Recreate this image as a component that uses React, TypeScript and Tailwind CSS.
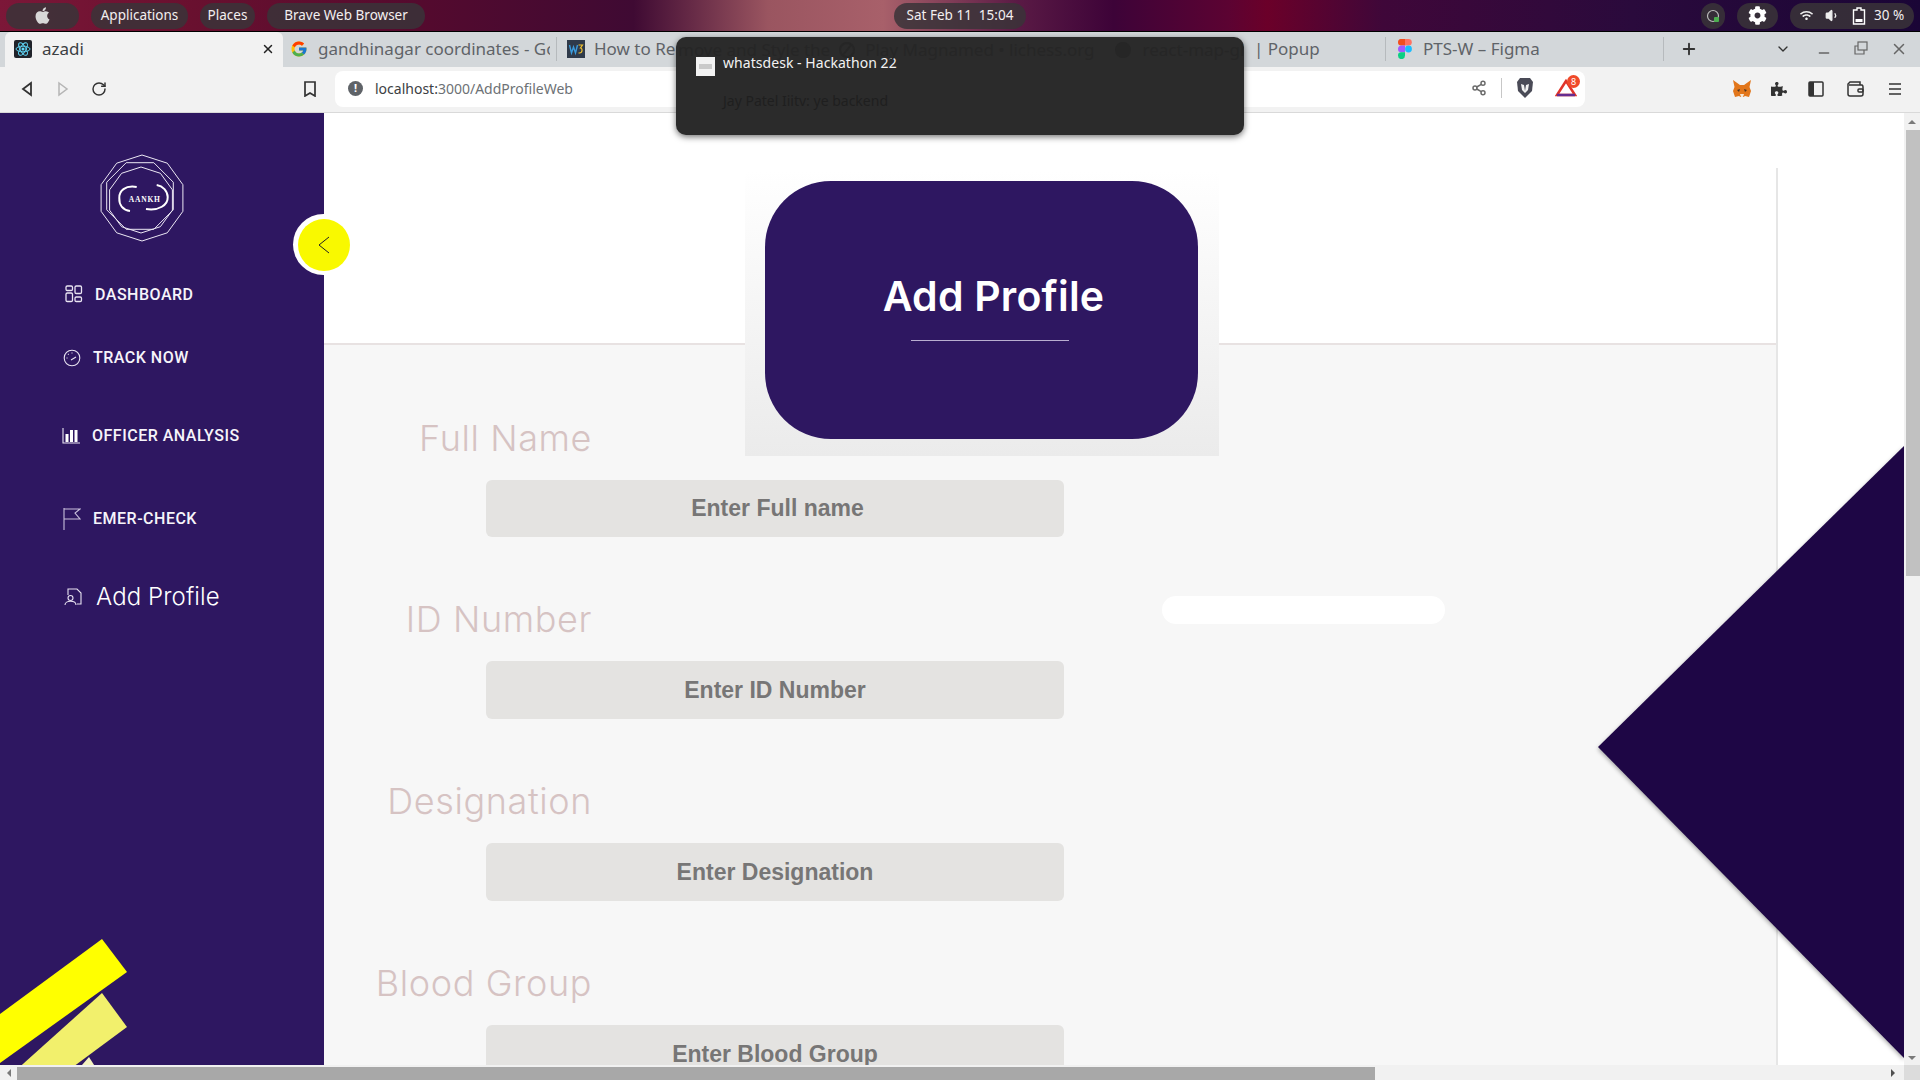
import { ChevronDown, Minus, Plus, RotateCw, Share2, Volume1, X } from 'lucide-react'
import { FaApple, FaCog, FaPuzzlePiece, FaWifi } from 'react-icons/fa'
import { FcGoogle } from 'react-icons/fc'

const uiFont = "font-['Noto_Sans',sans-serif]"

const fields = [
  { label: 'Full Name', placeholder: 'Enter Full name', box: 'h-[57px] pl-[5px]' },
  { label: 'ID Number', placeholder: 'Enter ID Number', box: 'h-[58px]' },
  { label: 'Designation', placeholder: 'Enter Designation', box: 'h-[58px]' },
  { label: 'Blood Group', placeholder: 'Enter Blood Group', box: 'h-[58px]' },
]

function polygonPoints(cx: number, cy: number, r: number, sides: number, start: number) {
  const pts: string[] = []
  for (let i = 0; i < sides; i++) {
    const a = start + (i * Math.PI * 2) / sides
    pts.push(`${(cx + r * Math.cos(a)).toFixed(1)},${(cy + r * Math.sin(a)).toFixed(1)}`)
  }
  return pts.join(' ')
}

function Logo() {
  return (
    <svg width="90" height="90" viewBox="0 0 90 90" fill="none" stroke="#ece8f4" strokeWidth="1">
      <polygon points={polygonPoints(45, 45, 43, 10, -Math.PI / 2)} />
      <polygon points={polygonPoints(43, 43, 36, 8, -Math.PI / 8)} />
      <polygon points={polygonPoints(44, 47, 33, 10, -Math.PI / 2)} />
      <path d="M39.700 34C28 32 22 38 22.300 45C22 52 26 57 33 58" strokeWidth="2" stroke="#fff" />
      <path d="M49 56C62 58 71 52 70.700 44C70.500 38 66 33 59.700 32" strokeWidth="2" stroke="#fff" />
      <text x="47.700" y="48.500" textAnchor="middle" fill="#fff" stroke="none" fontSize="7.500" fontWeight="700" fontFamily="Liberation Serif, serif" letterSpacing="0.8">AANKH</text>
    </svg>
  )
}

function ReactFavicon() {
  return (
    <svg width="18" height="18" viewBox="0 0 18 18" fill="none">
      <rect width="18" height="18" rx="2" fill="#20232a" />
      <g stroke="#61dafb" strokeWidth="0.9">
        <ellipse cx="9" cy="9" rx="7" ry="2.800" />
        <ellipse cx="9" cy="9" rx="7" ry="2.800" transform="rotate(60 9 9)" />
        <ellipse cx="9" cy="9" rx="7" ry="2.800" transform="rotate(120 9 9)" />
      </g>
      <circle cx="9" cy="9" r="1.500" fill="#61dafb" />
    </svg>
  )
}

function W3Favicon() {
  return (
    <svg width="18" height="18" viewBox="0 0 18 18" fill="none">
      <rect width="18" height="18" fill="#2f3a4a" />
      <path d="M2.500 5l2 8 2-6 2 6 2-8" stroke="#3b9bdc" strokeWidth="1.400" />
      <path d="M11.500 5h4l-2 3c2 0 2.400 5-1 5h-1" stroke="#f2c230" strokeWidth="1.200" />
    </svg>
  )
}

function FigmaFavicon() {
  return (
    <svg width="14" height="20" viewBox="0 0 14 20">
      <path d="M0 3.300A3.300 3.300 0 0 1 3.500 0H7v6.600H3.500A3.300 3.300 0 0 1 0 3.300z" fill="#f24e1e" />
      <path d="M7 0h3.500a3.300 3.300 0 0 1 0 6.600H7z" fill="#ff7262" />
      <path d="M0 10a3.300 3.300 0 0 1 3.500-3.400H7v6.700H3.500A3.300 3.300 0 0 1 0 10z" fill="#a259ff" />
      <circle cx="10.500" cy="10" r="3.400" fill="#1abcfe" />
      <path d="M0 16.600a3.300 3.300 0 0 1 3.500-3.300H7v3.300a3.400 3.400 0 0 1-7 0z" fill="#0acf83" />
    </svg>
  )
}

function Fox() {
  return (
    <svg width="20" height="20" viewBox="0 0 20 20">
      <path d="M1 1l7 5h4l7-5-1.500 7 1.500 4-2 6-4-1-1.500 1h-3L7 17l-4 1-2-6 1.500-4z" fill="#e2761b" />
      <path d="M5 11l3-1-1 3zM15 11l-3-1 1 3z" fill="#4a3424" />
      <path d="M8 15h4l-1 3H9z" fill="#f5e6d6" />
    </svg>
  )
}

function TopPill({ className, children }: { className: string; children: React.ReactNode }) {
  return (
    <div className={`h-[26px] rounded-full bg-[#3a3438]/85 text-[#f3eff0] flex items-center justify-center text-[13.5px] ${className}`}>
      {children}
    </div>
  )
}

function TopBar() {
  return (
    <div className={`h-8 shrink-0 flex items-center border-b border-black bg-[linear-gradient(90deg,#7c1738_0%,#69102f_10%,#540a2e_22%,#3f0a33_33%,#9a5560_40%,#a8606a_46%,#5a1a45_53%,#3d0338_58%,#5c0332_64%,#6b0029_66%,#3f0739_72%,#2a0a3c_85%,#1a0536_100%)] ${uiFont}`}>
      <TopPill className="w-[73px] ml-[6px]"><FaApple size={19} color="#d8d8d8" /></TopPill>
      <TopPill className="w-[97px] ml-3">Applications</TopPill>
      <TopPill className="w-[55px] ml-3">Places</TopPill>
      <TopPill className="w-[158px] ml-3">Brave Web Browser</TopPill>
      <TopPill className="w-[132px] ml-[469px]">Sat Feb 11&nbsp; 15:04</TopPill>
      <TopPill className="w-[24px] ml-[675px] bg-[#2f2b33]">
        <svg width="14" height="14" viewBox="0 0 14 14" fill="none">
          <circle cx="7" cy="7" r="5.500" stroke="#bbb" strokeWidth="1.200" />
          <rect x="8" y="8" width="5" height="5" rx="1" fill="#4caf50" />
        </svg>
      </TopPill>
      <TopPill className="w-[41px] ml-3 bg-[#1f1a26]"><FaCog size={19} color="#fff" /></TopPill>
      <TopPill className="w-[124px] ml-3 gap-3 !justify-start pl-[10px] bg-[#2a2630]">
        <FaWifi size={13} color="#eee" />
        <Volume1 size={15} color="#eee" fill="#eee" />
        <svg width="14" height="18" viewBox="0 0 14 18" fill="none">
          <path d="M5 1h4v2h3.500v14h-11V3H5z" stroke="#fff" strokeWidth="1.400" />
          <rect x="3.500" y="12" width="7" height="3" fill="#fff" />
        </svg>
        <span className="-ml-1">30 %</span>
      </TopPill>
    </div>
  )
}

function TabStrip() {
  const tabCls = 'h-[24px] shrink-0 border-r border-[#b6babd] flex items-center overflow-hidden text-[17px] text-[#5f6368] whitespace-nowrap'
  return (
    <div className={`h-[35px] shrink-0 bg-[#d3d7da] flex items-center pb-[2px] ${uiFont}`}>
      <div className="ml-[5px] w-[278px] h-[35px] -mb-[2px] bg-[#f2f2f2] rounded-t-md flex items-center pb-[2px] pl-[9px] pr-[8px] text-[17px] text-[#3c4043]">
        <ReactFavicon />
        <span className="ml-[10px] flex-1">azadi</span>
        <X size={14} color="#222" strokeWidth={2.500} />
      </div>
      <div className={`${tabCls} w-[274px] pl-[7px]`}>
        <FcGoogle size={18} className="shrink-0" />
        <span className="ml-[10px] w-[232px] overflow-hidden">gandhinagar coordinates - Go</span>
      </div>
      <div className={`${tabCls} w-[276px] pl-[10px]`}>
        <W3Favicon />
        <span className="ml-[9px]">How to Re</span>
      </div>
      <div className={`${tabCls} w-[277px]`} />
      <div className={`${tabCls} w-[276px] pl-[144px]`}>
        <span>| Popup</span>
      </div>
      <div className={`${tabCls} w-[278px] pl-[12px]`}>
        <FigmaFavicon />
        <span className="ml-[11px]">PTS-W – Figma</span>
      </div>
      <Plus size={18} color="#333" strokeWidth={2.500} className="ml-4" />
      <ChevronDown size={16} color="#333" className="ml-[77px]" />
      <Minus size={16} color="#666" className="ml-[25px] mt-2" />
      <svg width="14" height="14" viewBox="0 0 14 14" fill="none" stroke="#666" strokeWidth="1.200" className="ml-[22px] -mt-[2px]">
        <rect x="4" y="1" width="9" height="8" />
        <path d="M4 5H1v8h9v-4" />
      </svg>
      <X size={18} color="#666" className="ml-[22px]" />
    </div>
  )
}

function Toolbar() {
  return (
    <div className={`h-[46px] shrink-0 bg-[#f2f2f2] border-b border-[#d9d9d9] flex items-center pb-[1px] ${uiFont}`}>
      <svg width="14" height="16" viewBox="0 0 14 16" fill="none" stroke="#333" strokeWidth="1.800" className="ml-5">
        <path d="M11 2L3 8l8 6z" />
      </svg>
      <svg width="14" height="16" viewBox="0 0 14 16" fill="none" stroke="#b5b5b5" strokeWidth="1.500" className="ml-[22px]">
        <path d="M3 2l8 6-8 6z" />
      </svg>
      <RotateCw size={16} color="#333" strokeWidth={2.200} className="ml-[21px]" />
      <svg width="14" height="16" viewBox="0 0 14 16" fill="none" stroke="#333" strokeWidth="1.700" className="ml-[196px]">
        <path d="M2 1h10v14l-5-3-5 3z" />
      </svg>
      <div className="ml-[18px] w-[1250px] h-9 bg-white rounded-lg flex items-center pl-[13px] pr-[8px] pb-[2px] text-[14px]">
        <span className="w-[15px] h-[15px] rounded-full bg-[#5f6368] text-white text-[11px] font-bold flex items-center justify-center">!</span>
        <span className="ml-[12px] text-[#3c4043]">localhost:</span>
        <span className="text-[#6d7175]">3000/AddProfileWeb</span>
        <span className="flex-1" />
        <Share2 size={16} color="#6b6b6b" strokeWidth={2.200} className="mr-[14px]" />
        <span className="w-px h-5 bg-[#c7c7c7] mr-[14px]" />
        <svg width="18" height="22" viewBox="0 0 18 22" className="mr-[21px]">
          <path d="M4 1h10l3 4-1 9-7 7-7-7-1-9z" fill="#4a4b57" />
          <path d="M5 7l3 1 1 6 1-6 3-1-1 6-3 3-3-3z" fill="#f2f2f2" />
        </svg>
        <span className="relative w-[22px] h-5">
          <svg width="22" height="20" viewBox="0 0 22 20" fill="none">
            <path d="M11 3L2 17h18z" stroke="#e0342a" strokeWidth="2.500" />
            <path d="M2 17h18" stroke="#662d91" strokeWidth="2.500" />
          </svg>
          <span className="absolute -top-[3px] -right-[3px] w-[13px] h-[13px] rounded-full bg-[#f04a2a] text-white text-[9px] flex items-center justify-center">8</span>
        </span>
      </div>
      <span className="ml-[147px]"><Fox /></span>
      <FaPuzzlePiece size={16} color="#333" className="ml-[19px]" />
      <svg width="16" height="16" viewBox="0 0 16 16" fill="none" className="ml-[21px]">
        <rect x="1" y="1" width="14" height="14" rx="1" stroke="#333" strokeWidth="1.500" />
        <rect x="1" y="1" width="5" height="14" fill="#333" />
      </svg>
      <svg width="18" height="16" viewBox="0 0 18 16" fill="none" stroke="#333" strokeWidth="1.500" className="ml-[23px]">
        <path d="M2 4h13a2 2 0 0 1 1 2v7a2 2 0 0 1-2 2H3a2 2 0 0 1-2-2V3l2-2h10v3" />
        <rect x="11" y="8" width="5" height="3" rx="1" />
      </svg>
      <svg width="14" height="14" viewBox="0 0 14 14" stroke="#333" strokeWidth="1.600" className="ml-[23px]">
        <path d="M1 2h12M1 7h12M1 12h12" />
      </svg>
    </div>
  )
}

function Notification() {
  return (
    <div className={`absolute left-[676px] top-[37px] w-[568px] h-[98px] rounded-[10px] bg-[#2b2b2b] shadow-[0_2px_6px_rgba(0,0,0,0.55)] z-20 ${uiFont}`}>
      {/* tab titles showing faintly through the popup */}
      <div className="absolute left-[2px] top-[1px] h-6 flex items-center text-[17px] text-[#262626] whitespace-nowrap">
        <span>move and Style the</span>
        <svg width="18" height="18" viewBox="0 0 18 18" fill="none" stroke="#262626" strokeWidth="2" className="ml-[8px]">
          <circle cx="9" cy="9" r="7" />
          <path d="M5 14l8-10" />
        </svg>
        <span className="ml-[9px]">Play Magnamed • lichess.org</span>
        <svg width="18" height="18" viewBox="0 0 18 18" className="ml-[19px]">
          <circle cx="9" cy="9" r="8" fill="#262626" />
        </svg>
        <span className="ml-[11px]">react-map-gl</span>
      </div>
      <div className="flex items-center pl-5 pt-5">
        <div className="w-[19px] h-[19px] bg-[#f2f2f2] flex items-center justify-center">
          <div className="w-[13px] h-[5px] bg-[#c9c9c9]" />
        </div>
        <span className="ml-2 -mt-[9px] text-[14px] tracking-[0.05px] text-[#f2f2f2]">whatsdesk - Hackathon 22</span>
      </div>
      <p className="ml-[47px] mt-[14px] text-[14px] text-[#1f1f1f]">Jay Patel Iiitv: ye backend</p>
    </div>
  )
}

function Sidebar() {
  const itemCls = "flex items-center h-6 text-[#f6f4fa] font-['Roboto',sans-serif] font-medium text-[16px] tracking-[0.5px]"
  return (
    <aside className="relative w-[324px] shrink-0 bg-[#2e1761] overflow-hidden">
      <div className="pt-[40px] pl-[97px] h-[127px]">
        <Logo />
      </div>
      <nav className="pl-[63px]">
        <div className={`${itemCls} mt-[43px]`}>
          <svg width="18" height="18" viewBox="0 0 18 18" fill="none" stroke="#e9e4f2" strokeWidth="1.300" className="ml-[2px] -mt-[2px]">
            <rect x="1" y="1" width="6.500" height="4.500" rx="1.300" />
            <rect x="10" y="1" width="6.500" height="7.500" rx="1.300" />
            <rect x="1" y="8" width="6.500" height="8.500" rx="1.300" />
            <rect x="10" y="12" width="6.500" height="4.500" rx="1.300" />
          </svg>
          <span className="ml-[12px]">DASHBOARD</span>
        </div>
        <div className={`${itemCls} mt-[39px]`}>
          <svg width="18" height="18" viewBox="0 0 18 18" fill="none" stroke="#e9e4f2" strokeWidth="1.100">
            <circle cx="9" cy="9" r="7.800" />
            <path d="M8 11l5-3M3.500 9h1M9 3.500v1M5 5l.7.7" />
          </svg>
          <span className="ml-[12px]">TRACK NOW</span>
        </div>
        <div className={`${itemCls} mt-[54px]`}>
          <svg width="18" height="16" viewBox="0 0 18 16" fill="none" className="-ml-px">
            <path d="M1 0v15h17" stroke="#e9e4f2" strokeWidth="1.100" />
            <rect x="3.500" y="6" width="3" height="8" fill="#fff" />
            <rect x="8" y="2" width="3" height="12" fill="#fff" />
            <rect x="12.500" y="2" width="3" height="12" fill="#fff" />
          </svg>
          <span className="ml-[12px]">OFFICER ANALYSIS</span>
        </div>
        <div className={`${itemCls} mt-[59px]`}>
          <svg width="18" height="22" viewBox="0 0 18 22" fill="none" stroke="#c9c0dc" strokeWidth="1.100">
            <path d="M1 0v22M1 1h16l-5 4 5 6H1" />
          </svg>
          <span className="ml-[12px]">EMER-CHECK</span>
        </div>
        <div className="flex items-center h-6 mt-[54px] text-white">
          <svg width="18" height="18" viewBox="0 0 18 18" fill="none" stroke="#e9e4f2" strokeWidth="1.100" className="ml-px">
            <path d="M4 7V1h9l4 4v11h-4" />
            <circle cx="6.500" cy="10" r="2.500" />
            <path d="M1 17c0-5 11-5 11 0" />
          </svg>
          <span className="ml-[14px] text-[24px] tracking-[0.1px] font-['Inter',sans-serif] font-light">Add Profile</span>
        </div>
      </nav>
      <svg width="128" height="142" viewBox="0 0 128 142" className="absolute left-0 -bottom-[16px]">
        <polygon points="102,0 127,33 0,124 0,75" fill="#ffff00" />
        <polygon points="102,54 127,88 54,142 4,142" fill="#f2f06c" />
        <polygon points="89,118 96,129 78,142 68,142" fill="#f5f3c0" />
      </svg>
    </aside>
  )
}

function SideToggle() {
  return (
    <div className="absolute left-[293px] top-[101px] w-[61px] h-[61px] rounded-full bg-white flex items-center justify-center z-10">
      <div className="w-[52px] h-[52px] rounded-full bg-[#f9f900] flex items-center justify-center">
        <svg width="12" height="18" viewBox="0 0 12 18" fill="none" stroke="#222" strokeWidth="1">
          <path d="M11 1L1 9l10 8" />
        </svg>
      </div>
    </div>
  )
}

function Content() {
  return (
    <main className="relative flex-1 bg-white overflow-hidden">
      <div className="w-[1454px] h-full mt-[55px] flex flex-col border-r-2 border-[#e6e6e6]">
        <div className="h-[177px] shrink-0 border-b-2 border-[#e8e2e2]" />
        <div className="flex-1 bg-[#f7f7f7] pt-[66px]">
          {fields.map((f, i) => (
            <div key={f.label} className={i > 0 ? 'mt-[55px]' : ''}>
              <div className="w-[268px] h-[54px] flex items-center justify-end text-[36px] tracking-[0.6px] font-light text-[#d6c3c3] font-['Inter',sans-serif] whitespace-nowrap">
                {f.label}
              </div>
              <div className={`ml-[162px] mt-[15px] w-[578px] rounded-md bg-[#e4e3e1] flex items-center justify-center text-[23px] font-bold text-[#777676] font-['Liberation_Sans',sans-serif] ${f.box}`}>
                {f.placeholder}
              </div>
            </div>
          ))}
        </div>
      </div>

      <div className="absolute left-[421px] top-[57px] w-[474px] h-[286px] bg-gradient-to-b from-white to-[#ebebeb] pt-[11px] px-5">
        <div className="w-[433px] h-[258px] rounded-[66px] bg-[#2e1761] flex flex-col items-center pt-[90px] text-white">
          <h1 className="ml-[24px] text-[41px] leading-[50px] tracking-[0.2px] font-semibold font-['Inter',sans-serif]">Add Profile</h1>
          <div className="mt-[19px] ml-[17px] w-[158px] h-px bg-[#b9aed0]" />
        </div>
      </div>

      <div className="absolute left-[838px] top-[483px] w-[283px] h-[28px] rounded-full bg-white" />

      <svg width="306" height="612" viewBox="0 0 306 612" className="absolute right-0 top-[333px] drop-shadow-[0_2px_2px_rgba(0,0,0,0.35)]">
        <polygon points="306,0 0,301 306,612" fill="#1e0645" />
      </svg>
    </main>
  )
}

function VerticalScrollbar() {
  return (
    <div className="w-4 shrink-0 bg-[#f1f1f1] flex flex-col items-end">
      <div className="w-full h-[17px] flex items-center justify-center">
        <div className="w-0 h-0 border-x-4 border-x-transparent border-b-4 border-b-[#7a7a7a]" />
      </div>
      <div className="h-[446px] w-[14px] bg-[#c1c1c1]" />
      <div className="flex-1" />
      <div className="w-full h-[14px] flex items-center justify-center">
        <div className="w-0 h-0 border-x-4 border-x-transparent border-t-4 border-t-[#7a7a7a]" />
      </div>
    </div>
  )
}

function HorizontalScrollbar() {
  return (
    <div className="h-[15px] shrink-0 bg-[#f1f1f1] flex items-end">
      <div className="w-[17px] h-[15px] flex items-center justify-center">
        <div className="w-0 h-0 border-y-4 border-y-transparent border-r-4 border-r-[#7a7a7a]" />
      </div>
      <div className="w-[1358px] h-[13px] bg-[#a8a8a8]" />
      <div className="flex-1" />
      <div className="w-[14px] h-[15px] mr-[4px] flex items-center justify-center">
        <div className="w-0 h-0 border-y-4 border-y-transparent border-l-4 border-l-[#505050]" />
      </div>
      <div className="w-4 h-[15px] bg-[#dcdcdc]" />
    </div>
  )
}

export default function App() {
  return (
    <div className="relative w-[1920px] h-[1080px] overflow-hidden flex flex-col bg-white">
      <TopBar />
      <TabStrip />
      <Toolbar />
      <Notification />
      <div className="relative flex-1 flex min-h-0">
        <Sidebar />
        <SideToggle />
        <Content />
        <VerticalScrollbar />
      </div>
      <HorizontalScrollbar />
    </div>
  )
}
